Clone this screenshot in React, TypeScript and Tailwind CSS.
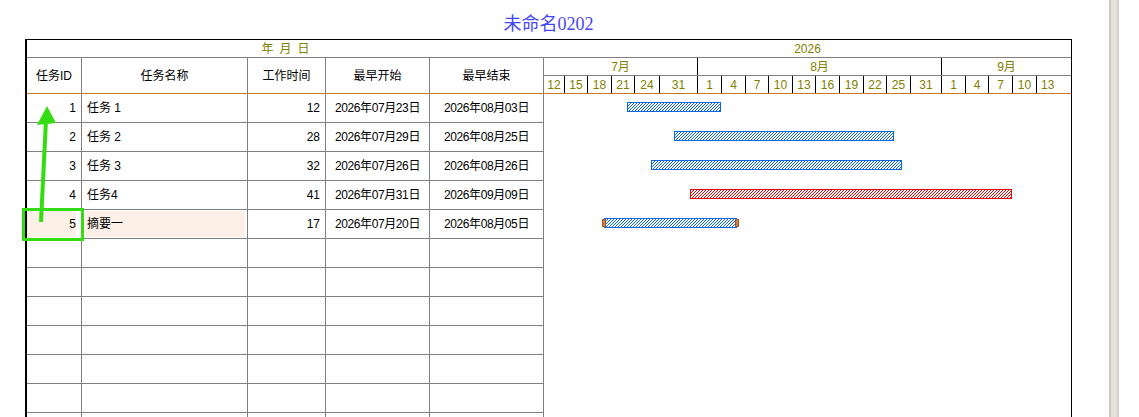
const font = "font-['Liberation_Sans','Noto_Sans_CJK_SC',sans-serif]";

const tasks = [
  { id: 1, name: "任务 1", dur: 12, start: "2026年07月23日", end: "2026年08月03日", d: 2, red: false, summary: false },
  { id: 2, name: "任务 2", dur: 28, start: "2026年07月29日", end: "2026年08月25日", d: 8, red: false, summary: false },
  { id: 3, name: "任务 3", dur: 32, start: "2026年07月26日", end: "2026年08月26日", d: 5, red: false, summary: false },
  { id: 4, name: "任务4", dur: 41, start: "2026年07月31日", end: "2026年09月09日", d: 10, red: true, summary: false },
  { id: 5, name: "摘要一", dur: 17, start: "2026年07月20日", end: "2026年08月05日", d: -1, red: false, summary: true },
];

const months: [string, number][] = [
  ["7月", 154],
  ["8月", 244],
  ["9月", 129],
];

const days: [string, number][] = [
  ["12", 21], ["15", 23], ["18", 24], ["21", 23], ["24", 25], ["31", 38],
  ["1", 24], ["4", 24], ["7", 23], ["10", 24], ["13", 23], ["16", 24], ["19", 24], ["22", 23], ["25", 24], ["31", 31],
  ["1", 24], ["4", 23], ["7", 24], ["10", 24], ["13", 34],
];

// pixels per day on the chart, and offset of Jul 21 from the chart's left edge
const DAY = 7.85;
const ORIGIN = 67.5;

const EMPTY_ROWS = 7;

function Bar({ d, dur, red, summary }: { d: number; dur: number; red: boolean; summary: boolean }) {
  const left = Math.round(ORIGIN + d * DAY);
  const width = Math.round(dur * DAY);
  return (
    <div
      className={
        red
          ? "relative h-[10px] border border-[#e60000] bg-[linear-gradient(135deg,#e60000_0%,#e60000_14%,#ffffff_14%,#ffffff_36%,#e60000_36%,#e60000_64%,#ffffff_64%,#ffffff_86%,#e60000_86%,#e60000_100%)] bg-size-[3px_3px]"
          : "relative h-[10px] border border-[#0a68de] bg-[linear-gradient(135deg,#0a68de_0%,#0a68de_14%,#ffffff_14%,#ffffff_36%,#0a68de_36%,#0a68de_64%,#ffffff_64%,#ffffff_86%,#0a68de_86%,#0a68de_100%)] bg-size-[3px_3px]"
      }
      style={{ marginLeft: left, width }}
    >
      {summary && (
        <>
          <div className="absolute left-[-3px] top-0 h-[8px] w-[4px] border border-[#9a5b2a] bg-[#cf8040]" />
          <div className="absolute right-[-3px] top-0 h-[8px] w-[4px] border border-[#9a5b2a] bg-[#cf8040]" />
        </>
      )}
    </div>
  );
}

export default function App() {
  return (
    <div className={`relative flex h-[417px] w-[1139px] overflow-hidden bg-white text-[12px] text-black ${font}`}>
      <div className="w-[1109px]">
        <div className="ml-[25px] flex h-[39px] w-[1047px] justify-center pt-[13px]">
          <span className="font-['Liberation_Serif','Noto_Sans_CJK_SC',serif] text-[18px] leading-[22px] text-[#4646fa]">
            未命名0202
          </span>
        </div>

        <div className="ml-[25px] flex w-[1047px] border-t border-r border-l-2 border-black">
          {/* task table */}
          <div className="w-[517px]">
            <div className="flex h-[18px] items-center justify-center gap-[6px] border-b border-[#808080] text-[#808000]">
              <span>年</span>
              <span>月</span>
              <span>日</span>
            </div>
            <div className="flex h-[36px] border-b border-[#cc7722]">
              <div className="flex w-[55px] items-center justify-center border-r border-[#808080]">任务ID</div>
              <div className="flex w-[166px] items-center justify-center border-r border-[#808080]">任务名称</div>
              <div className="flex w-[78px] items-center justify-center border-r border-[#808080]">工作时间</div>
              <div className="flex w-[104px] items-center justify-center border-r border-[#808080]">最早开始</div>
              <div className="flex w-[114px] items-center justify-center border-r border-[#808080]">最早结束</div>
            </div>

            {tasks.map((t) => (
              <div key={t.id} className="flex h-[29px] border-b border-[#808080]">
                <div className="flex w-[55px] border-r border-[#808080] py-px pr-[5px]">
                  <div
                    className={
                      t.summary
                        ? "flex flex-1 items-center justify-end bg-[#fdf0e7]"
                        : "flex flex-1 items-center justify-end"
                    }
                  >
                    {t.id}
                  </div>
                </div>
                <div className="flex w-[166px] border-r border-[#808080] py-px pl-[3px] pr-[2px]">
                  <div
                    className={
                      t.summary
                        ? "flex flex-1 items-center bg-[#fdf0e7] pl-[2px]"
                        : "flex flex-1 items-center pl-[2px]"
                    }
                  >
                    {t.name}
                  </div>
                </div>
                <div className="flex w-[78px] items-center justify-end border-r border-[#808080] pr-[5px]">{t.dur}</div>
                <div className="flex w-[104px] items-center justify-center border-r border-[#808080] tracking-[-0.4px]">
                  {t.start}
                </div>
                <div className="flex w-[114px] items-center justify-center border-r border-[#808080] tracking-[-0.4px]">
                  {t.end}
                </div>
              </div>
            ))}

            {Array.from({ length: EMPTY_ROWS }).map((_, i) => (
              <div key={i} className="flex h-[29px] border-b border-[#808080]">
                <div className="w-[55px] border-r border-[#808080]" />
                <div className="w-[166px] border-r border-[#808080]" />
                <div className="w-[78px] border-r border-[#808080]" />
                <div className="w-[104px] border-r border-[#808080]" />
                <div className="w-[114px] border-r border-[#808080]" />
              </div>
            ))}
          </div>

          {/* gantt chart */}
          <div className="w-[527px] text-[#808000]">
            <div className="flex h-[18px] items-center justify-center border-b border-[#808080]">2026</div>
            <div className="flex h-[18px] border-b border-[#808080]">
              {months.map(([m, w], i) => (
                <div
                  key={m}
                  className={
                    i < months.length - 1
                      ? "flex items-center justify-center border-r border-black"
                      : "flex items-center justify-center"
                  }
                  style={{ width: w }}
                >
                  {m}
                </div>
              ))}
            </div>
            <div className="flex h-[18px] border-b border-[#cc7722]">
              {days.map(([dd, w], i) => (
                <div
                  key={i}
                  className={
                    i < days.length - 1
                      ? "flex items-center justify-center border-r border-black"
                      : "flex items-center pl-[4px]"
                  }
                  style={{ width: w }}
                >
                  {dd}
                </div>
              ))}
            </div>

            {tasks.map((t) => (
              <div key={t.id} className="h-[29px] pt-[8px]">
                <Bar d={t.d} dur={t.dur} red={t.red} summary={t.summary} />
              </div>
            ))}
          </div>
        </div>
      </div>

      {/* scrollbar strip */}
      <div className="h-full w-[10px] border-l-2 border-r-2 border-l-[#cdc7c2] border-r-[#d6d1cc] bg-[#e4e0dc]" />

      {/* green annotation */}
      <svg className="pointer-events-none absolute left-0 top-0" width="1139" height="417">
        <rect x="23.5" y="209.5" width="59" height="30" fill="none" stroke="#33dd11" strokeWidth="3" />
        <line x1="41" y1="222" x2="46" y2="120" stroke="#33dd11" strokeWidth="4" />
        <polygon points="47,106 37,125 56,123" fill="#33dd11" />
      </svg>
    </div>
  );
}
